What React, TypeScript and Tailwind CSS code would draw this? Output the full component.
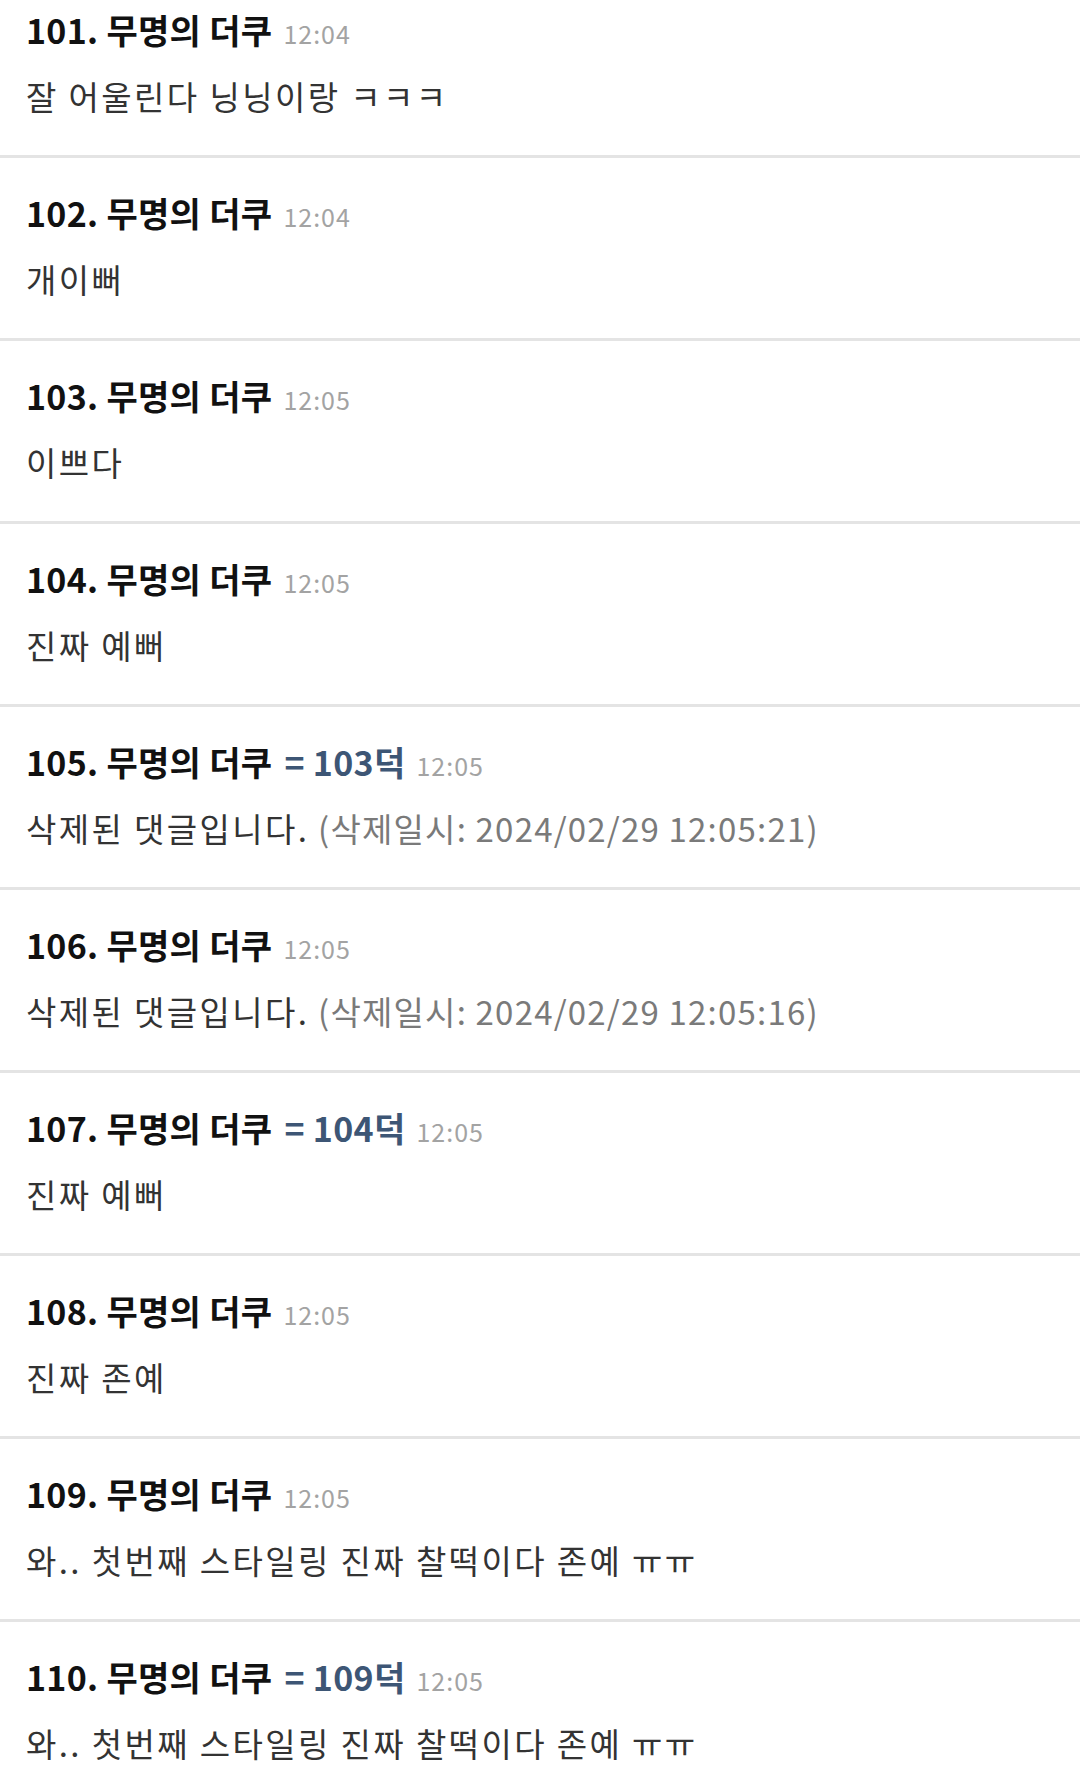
const comments = [
  { no: 101, time: "12:04", body: "잘 어울린다 닝닝이랑 ㅋㅋㅋ" },
  { no: 102, time: "12:04", body: "개이뻐" },
  { no: 103, time: "12:05", body: "이쁘다" },
  { no: 104, time: "12:05", body: "진짜 예뻐" },
  { no: 105, time: "12:05", reply: 103, body: "삭제된 댓글입니다.", deleted: "2024/02/29 12:05:21" },
  { no: 106, time: "12:05", body: "삭제된 댓글입니다.", deleted: "2024/02/29 12:05:16" },
  { no: 107, time: "12:05", reply: 104, body: "진짜 예뻐" },
  { no: 108, time: "12:05", body: "진짜 존예" },
  { no: 109, time: "12:05", body: "와.. 첫번째 스타일링 진짜 찰떡이다 존예 ㅠㅠ" },
  { no: 110, time: "12:05", reply: 109, body: "와.. 첫번째 스타일링 진짜 찰떡이다 존예 ㅠㅠ" },
]

type Comment = (typeof comments)[number] & { reply?: number; deleted?: string }

function CommentRow({ c }: { c: Comment }) {
  return (
    <li className="border-b-[3px] border-[#e4e4e4] pl-[26px] pr-6 pt-[33px] pb-[37px]">
      <div className="flex items-baseline h-[44px] leading-[44px] whitespace-nowrap">
        <span className="text-[34px] font-bold text-[#111] tracking-[0.3px]">
          {c.no}. 무명의 더쿠
        </span>
        {c.reply && (
          <span className="ml-[12px] text-[34px] font-bold text-[#3d5675] tracking-[0.3px]">
            = {c.reply}덕
          </span>
        )}
        <span className="ml-[11px] text-[25px] text-[#a3a3a3] tracking-[1px]">{c.time}</span>
      </div>
      <p className="mt-[22px] h-[44px] leading-[44px] text-[33px] text-[#333] tracking-[2.4px] whitespace-nowrap">
        {c.body}
        {c.deleted && (
          <span className="text-[#7a7a7a] tracking-[1.2px]"> (삭제일시: {c.deleted})</span>
        )}
      </p>
    </li>
  )
}

export default function App() {
  return (
    <div
      className="w-[1080px] h-[1785px] overflow-hidden bg-white"
      style={{ fontFamily: '"Noto Sans CJK KR", "Noto Sans", sans-serif' }}
    >
      <ul className="-mt-[25px]">
        {comments.map((c) => (
          <CommentRow key={c.no} c={c as Comment} />
        ))}
      </ul>
    </div>
  )
}
